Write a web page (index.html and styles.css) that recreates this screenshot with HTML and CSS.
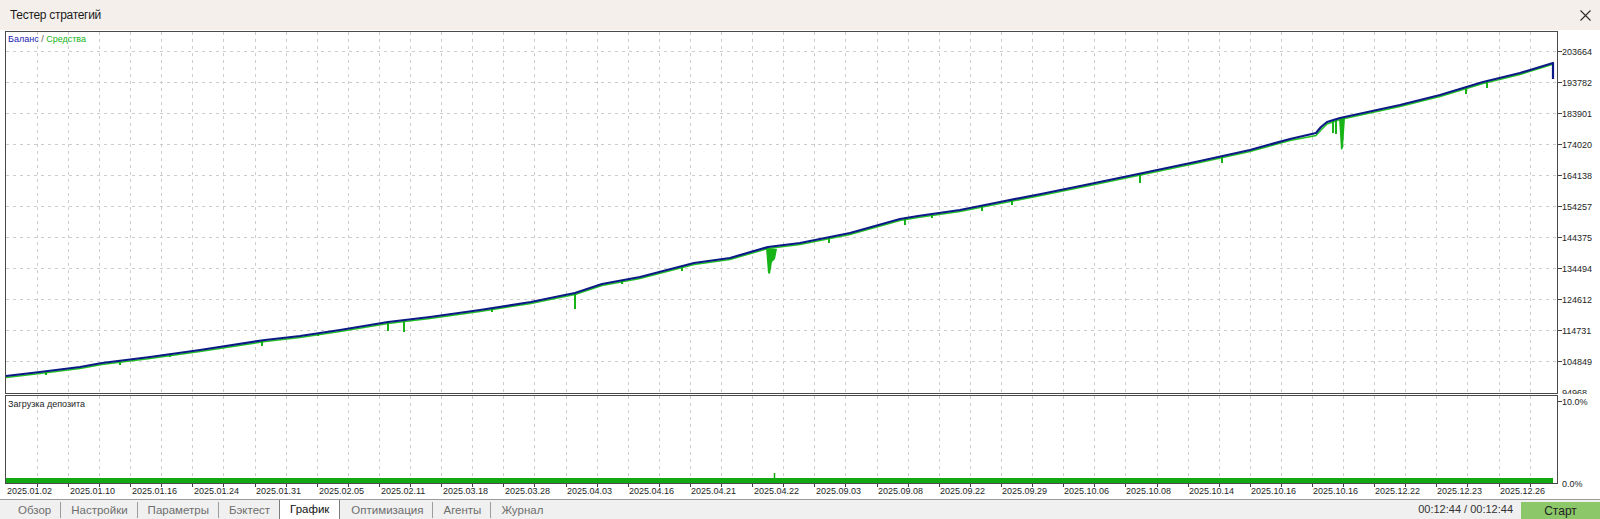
FILE: index.html
```html
<!DOCTYPE html>
<html lang="ru">
<head>
    <meta charset="UTF-8">
    <meta name="viewport" content="width=device-width, initial-scale=1.0">
    <title>Тестер стратегий</title>
    <link rel="stylesheet" href="styles.css">
</head>
<body>

    <header class="titlebar">
        <span class="title">Тестер стратегий</span>
        <button class="close" title="Закрыть">
            <svg width="11" height="11" viewBox="0 0 11 11"><path d="M0.5 0.5L10.5 10.5M10.5 0.5L0.5 10.5"/></svg>
        </button>
    </header>

    <!-- график баланса и загрузки депозита -->
    <main class="chart">
        <svg class="plot" width="1600" height="469" viewBox="0 30 1600 469">
            <!-- сетка -->
            <path class="grid" d="M6 51.5H1557M6 82.5H1557M6 113.5H1557M6 144.5H1557M6 175.5H1557M6 206.5H1557M6 237.5H1557M6 268.5H1557M6 299.5H1557M6 330.5H1557M6 361.5H1557"/>
            <path class="grid" d="M37.5 32V483M68.5 32V483M99.5 32V483M130.5 32V483M161.5 32V483M192.5 32V483M223.5 32V483M255.5 32V483M286.5 32V483M317.5 32V483M348.5 32V483M379.5 32V483M410.5 32V483M441.5 32V483M472.5 32V483M503.5 32V483M534.5 32V483M566.5 32V483M597.5 32V483M628.5 32V483M659.5 32V483M690.5 32V483M721.5 32V483M752.5 32V483M783.5 32V483M814.5 32V483M845.5 32V483M877.5 32V483M908.5 32V483M939.5 32V483M970.5 32V483M1001.5 32V483M1032.5 32V483M1063.5 32V483M1094.5 32V483M1125.5 32V483M1157.5 32V483M1188.5 32V483M1219.5 32V483M1250.5 32V483M1281.5 32V483M1312.5 32V483M1343.5 32V483M1374.5 32V483M1405.5 32V483M1436.5 32V483M1467.5 32V483M1499.5 32V483M1530.5 32V483"/>

            <!-- средства -->
            <polyline class="equity-line" points="6,377.5 40,373.5 80,368.5 102,364.5 150,358.5 200,351.5 265,341.5 300,337.5 340,331.5 388,323.5 430,318.5 480,311.5 531,303.5 560,297.5 575,294.5 602,285.5 640,278.5 694,264.5 730,259.5 768,248.5 800,244.5 850,234.5 900,220.5 918,217.5 960,211.5 1000,203.5 1041,195.5 1090,185.5 1143,174.5 1200,162.5 1250,151.5 1290,140.5 1316,135.5 1321,130 1327,124 1340,119.5 1400,106.5 1440,96.5 1483,83.5 1520,74.5 1552,64.5"/>
            <path class="equity-dips" d="M46 371v4M120 361v4M170 354v3M262 341v5M318 333v3M388 322v9M404 320v12M492 308v4M575 293v16M622 280v4M682 266v5M829 238v5M905 218v7M932 214v4M982 206v5M1012 200v5M1140 174v9M1222 157v6M1333 120v13M1336 120v14M1466 87v7M1487 81v7"/>
            <polygon class="equity-fill" points="766,248 768,273 770,274 772,262 775,259 777,249"/>
            <polygon class="equity-fill" points="1339,118 1341,150 1343,148 1345,118"/>
            <!-- баланс -->
            <polyline class="balance-line" points="6,376 40,372 80,367 102,363 150,357 200,350 265,340 300,336 340,330 388,322 430,317 480,310 531,302 560,296 575,293 602,284 640,277 694,263 730,258 768,247 800,243 850,233 900,219 918,216 960,210 1000,202 1041,194 1090,184 1143,173 1200,161 1250,150 1290,139 1316,133 1321,127 1327,122 1340,118 1400,105 1440,95 1483,82 1520,73 1553,63 1553,79"/>

            <!-- загрузка депозита -->
            <rect class="load-bar" x="6" y="478" width="1547" height="5"/>
            <path class="load-spike" d="M774.5 473v5"/>

            <!-- рамки -->
            <rect class="frame" x="5.5" y="31.5" width="1552" height="362"/>
            <rect class="frame" x="5.5" y="395.5" width="1552" height="88"/>

            <!-- засечки -->
            <path class="tick" d="M1558 51.5h4M1558 82.5h4M1558 113.5h4M1558 144.5h4M1558 175.5h4M1558 206.5h4M1558 237.5h4M1558 268.5h4M1558 299.5h4M1558 330.5h4M1558 361.5h4M1558 401.5h4"/>
            <path class="tick" d="M37.5 484v3M68.5 484v3M99.5 484v3M130.5 484v3M161.5 484v3M192.5 484v3M223.5 484v3M255.5 484v3M286.5 484v3M317.5 484v3M348.5 484v3M379.5 484v3M410.5 484v3M441.5 484v3M472.5 484v3M503.5 484v3M534.5 484v3M566.5 484v3M597.5 484v3M628.5 484v3M659.5 484v3M690.5 484v3M721.5 484v3M752.5 484v3M783.5 484v3M814.5 484v3M845.5 484v3M877.5 484v3M908.5 484v3M939.5 484v3M970.5 484v3M1001.5 484v3M1032.5 484v3M1063.5 484v3M1094.5 484v3M1125.5 484v3M1157.5 484v3M1188.5 484v3M1219.5 484v3M1250.5 484v3M1281.5 484v3M1312.5 484v3M1343.5 484v3M1374.5 484v3M1405.5 484v3M1436.5 484v3M1467.5 484v3M1499.5 484v3M1530.5 484v3"/>

            <!-- подписи -->
            <text class="legend" x="8" y="42"><tspan class="legend-balance">Баланс</tspan> / <tspan class="legend-equity">Средства</tspan></text>
            <text class="caption" x="8" y="407">Загрузка депозита</text>

            <clipPath id="upperScale"><rect x="1558" y="30" width="42" height="364"/></clipPath>
            <g class="axis" clip-path="url(#upperScale)">
                <text x="1562" y="54.5">203664</text>
                <text x="1562" y="85.5">193782</text>
                <text x="1562" y="116.5">183901</text>
                <text x="1562" y="147.5">174020</text>
                <text x="1562" y="178.5">164138</text>
                <text x="1562" y="209.5">154257</text>
                <text x="1562" y="240.5">144375</text>
                <text x="1562" y="271.5">134494</text>
                <text x="1562" y="302.5">124612</text>
                <text x="1562" y="333.5">114731</text>
                <text x="1562" y="364.5">104849</text>
                <text x="1562" y="395.5">94968</text>
            </g>
            <g class="axis">
                <text x="1562" y="405">10.0%</text>
                <text x="1562" y="487">0.0%</text>
            </g>
            <g class="axis">
                <text x="7" y="494">2025.01.02</text>
                <text x="70" y="494">2025.01.10</text>
                <text x="132" y="494">2025.01.16</text>
                <text x="194" y="494">2025.01.24</text>
                <text x="256" y="494">2025.01.31</text>
                <text x="319" y="494">2025.02.05</text>
                <text x="381" y="494">2025.02.11</text>
                <text x="443" y="494">2025.03.18</text>
                <text x="505" y="494">2025.03.28</text>
                <text x="567" y="494">2025.04.03</text>
                <text x="629" y="494">2025.04.16</text>
                <text x="691" y="494">2025.04.21</text>
                <text x="754" y="494">2025.04.22</text>
                <text x="816" y="494">2025.09.03</text>
                <text x="878" y="494">2025.09.08</text>
                <text x="940" y="494">2025.09.22</text>
                <text x="1002" y="494">2025.09.29</text>
                <text x="1064" y="494">2025.10.06</text>
                <text x="1126" y="494">2025.10.08</text>
                <text x="1189" y="494">2025.10.14</text>
                <text x="1251" y="494">2025.10.16</text>
                <text x="1313" y="494">2025.10.16</text>
                <text x="1375" y="494">2025.12.22</text>
                <text x="1437" y="494">2025.12.23</text>
                <text x="1500" y="494">2025.12.26</text>
            </g>
        </svg>
    </main>

    <footer class="tabbar">
        <nav class="tabs">
            <span class="tab">Обзор</span>
            <span class="tab">Настройки</span>
            <span class="tab">Параметры</span>
            <span class="tab">Бэктест</span>
            <span class="tab active">График</span>
            <span class="tab">Оптимизация</span>
            <span class="tab">Агенты</span>
            <span class="tab">Журнал</span>
        </nav>
        <div class="status">
            <span class="elapsed">00:12:44 / 00:12:44</span>
            <button class="start">Старт</button>
        </div>
    </footer>

</body>
</html>
```

FILE: styles.css
```css
body {
    font-family: "Liberation Sans", Arial, sans-serif;
    background-color: #fff;
    margin: 0;
    padding: 0;
    width: 1600px;
    height: 519px;
    overflow: hidden;
}

.titlebar {
    display: flex;
    align-items: center;
    justify-content: space-between;
    height: 30px;
    padding: 0 9px 0 10px;
    box-sizing: border-box;
    background-color: #f4efeb;
}

.title {
    font-size: 12px;
    letter-spacing: -0.3px;
    color: #1a1a1a;
}

.close {
    display: flex;
    padding: 0;
    border: none;
    background: none;
}

.close path {
    stroke: #2b2b2b;
    stroke-width: 1.1;
    fill: none;
}

.chart {
    height: 469px;
    background-color: #fff;
}

.plot {
    display: block;
}

.grid {
    stroke: #cdcdcd;
    stroke-width: 1;
    stroke-dasharray: 3 4;
    fill: none;
}

.frame {
    fill: none;
    stroke: #4a4a4a;
    stroke-width: 1;
}

.tick {
    stroke: #404040;
    stroke-width: 1;
}

.balance-line {
    fill: none;
    stroke: #0b1a84;
    stroke-width: 2.2;
    stroke-linejoin: round;
}

.equity-line {
    fill: none;
    stroke: #22c322;
    stroke-width: 1.5;
}

.equity-dips {
    stroke: #17b417;
    stroke-width: 2;
}

.equity-fill {
    fill: #17b417;
}

.load-bar {
    fill: #12a812;
}

.load-spike {
    stroke: #12a812;
    stroke-width: 1.5;
}

.axis text,
.caption,
.legend {
    font-family: "Liberation Sans", Arial, sans-serif;
    font-size: 9px;
    fill: #1e1e1e;
}

.legend {
    fill: #555;
}

.legend-balance {
    fill: #2020b0;
}

.legend-equity {
    fill: #16b416;
}

.tabbar {
    display: flex;
    justify-content: space-between;
    height: 20px;
    box-sizing: border-box;
    border-top: 1px solid #9a9a9a;
    background-color: #f0f0f0;
}

.tabs {
    display: flex;
    padding-left: 7px;
}

.tab {
    padding: 0 9px 0 10px;
    margin: 2px 0 1px;
    border-left: 1px solid #9c9c9c;
    font-size: 11.5px;
    line-height: 16px;
    color: #6e6e6e;
}

.tab:first-child {
    border-left-color: transparent;
}

.tab.active {
    margin: 0;
    padding: 0 10px;
    line-height: 19px;
    background-color: #fff;
    border-left: 1px solid #7c7c7c;
    border-right: 1px solid #7c7c7c;
    color: #111;
}

.tab.active + .tab {
    border-left-color: transparent;
}

.status {
    display: flex;
    align-items: flex-end;
}

.elapsed {
    font-size: 11px;
    line-height: 19px;
    color: #333;
    margin-right: 8px;
}

.start {
    width: 79px;
    height: 17px;
    padding: 0;
    border: none;
    background-color: #8cc76a;
    font-family: "Liberation Sans", Arial, sans-serif;
    font-size: 12px;
    color: #222;
}
```
